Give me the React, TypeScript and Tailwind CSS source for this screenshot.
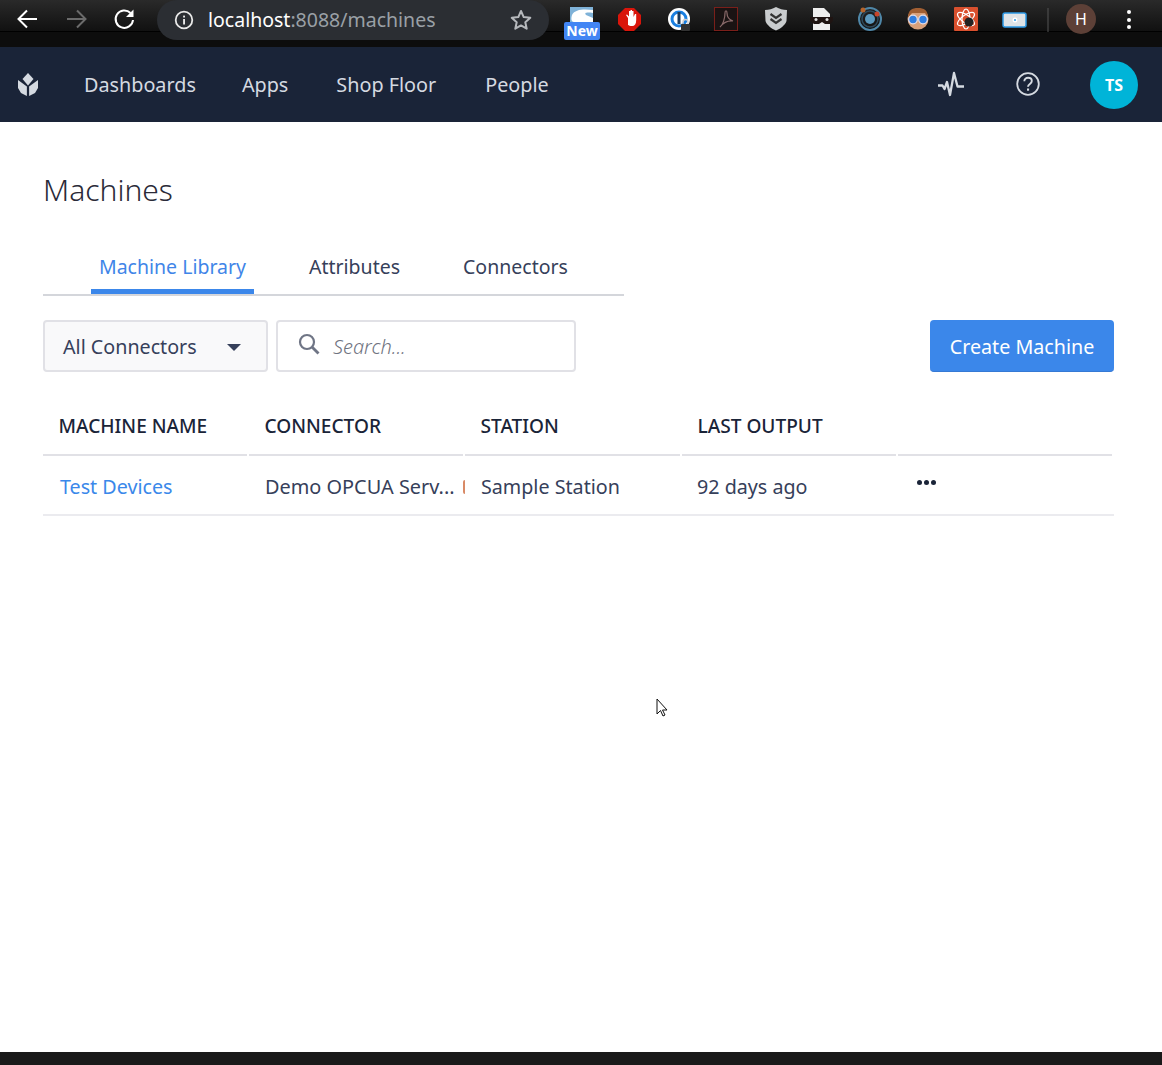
import React from "react";

const F = { fontFamily: '"Noto Sans", "Open Sans", sans-serif' };

function ChromeBar() {
  return (
    <div className="h-[47px] bg-[#0d0d0d] relative shrink-0 overflow-hidden">
      <div className="h-[32px] bg-gradient-to-b from-[#2a2a2a] to-[#111111] border-b border-black flex items-start">
        <svg width="157" height="32" viewBox="0 0 157 32" fill="none" className="shrink-0">
          <path d="M37 19H19M27 10.500 18.500 19l8.500 8.500" stroke="#fff" strokeWidth="2" />
          <path d="M67 19h18M77 10.500 85.500 19 77 27.500" stroke="#6b6b6b" strokeWidth="2" />
          <path d="M130.500 13a8.700 8.700 0 1 0 2.500 7" stroke="#fff" strokeWidth="2" />
          <path d="M133.500 9.500v7.500h-7.500z" fill="#fff" />
        </svg>
      </div>
      <div className="absolute left-[157px] top-0 w-[392px] h-[40px] rounded-[20px] bg-[#2b2e33] flex items-center pl-[17px] pr-[16px]">
        <svg width="20" height="20" viewBox="0 0 20 20" fill="none" className="shrink-0">
          <circle cx="10" cy="10" r="8.300" stroke="#e8e8e8" strokeWidth="1.800" />
          <rect x="9.100" y="9" width="1.900" height="5.500" fill="#e8e8e8" />
          <rect x="9.100" y="5.600" width="1.900" height="1.900" fill="#e8e8e8" />
        </svg>
        <div className="ml-[14px] text-[19.5px] leading-none text-white whitespace-nowrap" style={F}>
          localhost<span className="text-[#9aa0a6]">:8088/machines</span>
        </div>
        <svg width="24" height="24" viewBox="0 0 24 24" fill="none" className="ml-auto shrink-0">
          <path d="m12 3 2.700 6.100 6.600.7-5 4.400 1.400 6.500L12 17.400l-5.700 3.300 1.400-6.500-5-4.400 6.600-.7z" stroke="#b5b8bc" strokeWidth="2" strokeLinejoin="round" />
        </svg>
      </div>
      <div className="absolute left-[564px] top-[6px] w-[36px] h-[34px]">
        <svg width="36" height="18" viewBox="0 0 36 18" className="absolute left-0 top-0">
          <rect x="6" y="1" width="23" height="15" fill="#7fb2d8" />
          <path d="M8 9c3-6 12-6 21-5v3c-7-1-9 0-7 2l7 3v4H10c-3 0-3-4-2-7z" fill="#fff" />
        </svg>
        <div className="absolute left-0 top-[16px] w-[36px] h-[18px] bg-[#4285f4] rounded-[2px] text-white text-[14px] leading-[18px] font-bold text-center" style={F}>New</div>
      </div>
      <svg width="470" height="34" viewBox="0 0 470 34" fill="none" className="absolute left-[612px] top-0">
        <path d="M11 8h9l7 7v9l-7 7h-9l-7-7v-9z" transform="translate(2,0)" fill="#d9150b" />
        <path d="M12 22v-7l-2-3 1-.5 2 2V8h1.500v5V7h1.500v6V8h1.500v6l1.500-3h1.200v6c0 4-1.500 6-4 6s-3.200-.5-4.200-1z" transform="translate(4,3)" fill="#fff" />
        <circle cx="67" cy="19" r="11" fill="#fff" />
        <circle cx="67" cy="19" r="8.500" fill="#1a7fe0" />
        <circle cx="67" cy="19" r="5.500" fill="#fff" />
        <rect x="65.500" y="12" width="3" height="12" fill="#1c3a5a" />
        <rect x="69" y="24" width="9" height="7" rx="1" fill="#333" />
        <path d="M71 24v-2a2.500 2.500 0 0 1 5 0v2" stroke="#ccc" strokeWidth="1.300" />
        <rect x="102.500" y="7.500" width="23" height="23" fill="#1a1313" stroke="#7a1f1a" strokeWidth="1" />
        <path d="M108 27c3-2 5-9 5-14 0-3 2-3 2 0 0 4 3 7 6 8-4-.5-9 1-13 6z" stroke="#8a6a6a" strokeWidth="1.200" />
        <path d="M153 10c4 0 7.500-1 11-3 3.500 2 7 3 11 3l-.5 11c-1 4-6.500 8-10.500 9.500-4-1.500-9.500-5.500-10.500-9.500z" fill="#c9ccce" />
        <path d="m158.500 14 5.500 4 5.500-4M158.500 19l5.500 4 5.500-4" stroke="#333" strokeWidth="2.200" />
        <path d="M201 8h11l6 6v16h-17z" fill="#eee" />
        <path d="M198 17h23v4l-3 3h-5l-3-2-3 2h-5l-4-3z" fill="#1f1412" />
        <circle cx="204" cy="19.500" r="1.500" fill="#ddd" />
        <circle cx="215" cy="19.500" r="1.500" fill="#ddd" />
        <circle cx="258" cy="19" r="11" stroke="#4f87a8" strokeWidth="2" />
        <circle cx="258" cy="19" r="8" stroke="#2e4a5c" strokeWidth="1.500" />
        <circle cx="258" cy="19" r="5" fill="#5c99be" />
        <circle cx="251" cy="10" r="2.500" fill="#b4642c" />
        <circle cx="265" cy="14" r="2.500" fill="#c8452a" />
        <circle cx="306" cy="19" r="10.500" fill="#d8a07a" />
        <path d="M296 18c0-8 4-10 10-10s10 2 10 10l-3-5h-13z" fill="#a15f33" />
        <circle cx="301" cy="19.500" r="4.300" fill="#2f7de0" stroke="#dde" strokeWidth="1.200" />
        <circle cx="311" cy="19.500" r="4.300" fill="#2f7de0" stroke="#dde" strokeWidth="1.200" />
        <rect x="342" y="7" width="24" height="24" rx="1" fill="#d9502e" />
        <ellipse cx="354" cy="19" rx="10" ry="4" stroke="#fff" strokeWidth="1.200" transform="rotate(35 354 19)" />
        <ellipse cx="354" cy="19" rx="10" ry="4" stroke="#fff" strokeWidth="1.200" transform="rotate(-35 354 19)" />
        <ellipse cx="354" cy="19" rx="4" ry="10" stroke="#fff" strokeWidth="1.200" />
        <circle cx="357" cy="22" r="4.500" fill="#222" />
        <rect x="391" y="13" width="23" height="14" rx="2" fill="#dfe3e6" stroke="#2e9ae6" strokeWidth="1.500" />
        <circle cx="403" cy="20" r="2.500" fill="#fff" />
        <circle cx="403" cy="20" r="1" fill="#2e9ae6" />
        <rect x="435.500" y="8" width="1" height="24" fill="#555" />
      </svg>
      <div className="absolute left-[1066px] top-[4px] w-[30px] h-[30px] rounded-full bg-[#5d4037] text-white text-[16px] leading-[30px] text-center" style={F}>H</div>
      <div className="absolute left-[1127px] top-[10px] flex flex-col gap-[3.500px]">
        <div className="w-[4px] h-[4px] rounded-full bg-white" />
        <div className="w-[4px] h-[4px] rounded-full bg-white" />
        <div className="w-[4px] h-[4px] rounded-full bg-white" />
      </div>
    </div>
  );
}

function NavBar() {
  return (
    <nav className="h-[75px] bg-[#1a2438] flex items-center shrink-0 text-[#d5dae1] text-[19.8px]" style={F}>
      <svg width="22" height="24" viewBox="0 0 22 24" className="ml-[17px] shrink-0 -mt-[1px]" fill="#d5dae1">
        <path d="M11 1 16.500 7 11 13.500 5.500 7z" />
        <path d="M1 8 9.900 14.500V24L4 21 1 16z" />
        <path d="M21 8 12.100 14.500V24L18 21 21 16z" />
      </svg>
      <div className="ml-[45px] flex whitespace-nowrap">
        <span>Dashboards</span>
        <span className="ml-[46px]">Apps</span>
        <span className="ml-[48px]">Shop Floor</span>
        <span className="ml-[49px]">People</span>
      </div>
      <svg width="28" height="28" viewBox="0 0 28 28" fill="none" className="ml-auto shrink-0 -mt-[1px]">
        <path d="M1 15.500h4.500l2 3.500 2.500-7 3 13L17 3l3.500 13.500h6.500" stroke="#d5dae1" strokeWidth="2.300" strokeLinejoin="round" />
      </svg>
      <svg width="24" height="24" viewBox="0 0 24 24" fill="none" className="ml-[51px] shrink-0 -mt-[1px]">
        <circle cx="12" cy="12" r="10.800" stroke="#d5dae1" strokeWidth="1.800" />
        <path d="M8.300 9.300c0-2.200 1.700-3.500 3.800-3.500s3.700 1.300 3.700 3.200c0 2.900-3.800 2.900-3.800 5.700" stroke="#d5dae1" strokeWidth="1.900" />
        <rect x="11" y="16.500" width="2.100" height="2.200" fill="#d5dae1" />
      </svg>
      <div className="ml-[50px] mr-[24px] w-[48px] h-[48px] rounded-full bg-[#00b4d8] text-white text-[16px] font-bold flex items-center justify-center shrink-0">TS</div>
    </nav>
  );
}

const cols = [
  { label: "MACHINE NAME", width: "w-[204px]" },
  { label: "CONNECTOR", width: "w-[214px]" },
  { label: "STATION", width: "w-[215px]" },
  { label: "LAST OUTPUT", width: "w-[214px]" },
  { label: "", width: "w-[214px]" },
];

function MachinesTable() {
  return (
    <div className="mt-[29px] ml-[43px] w-[1071px]">
      <div className="flex gap-[2px] w-[1069px]">
        {cols.map((c) => (
          <div key={c.width + c.label} className={`h-[55px] border-b-2 border-[#e1e1e6] pl-[15.500px] pt-[12px] text-[19.100px] leading-[27px] font-medium text-[#1a2438] whitespace-nowrap ${c.width}`}>
            {c.label}
          </div>
        ))}
      </div>
      <div className="flex h-[60px] border-b-2 border-[#ebebef] text-[19.700px] leading-[27px] text-[#36405a]">
        <div className="w-[206px] pl-[17px] pt-[17px] text-[#3a88ea] whitespace-nowrap">Test Devices</div>
        <div className="w-[216px] pl-[16px] pt-[17px] whitespace-nowrap flex">
          <span className="text-[19.900px]">Demo OPCUA Serv...</span>
          <span className="ml-[8px] mt-[7px] w-[2px] h-[14px] border-l-2 border-[#d98a66] rounded-l-[2px]" />
        </div>
        <div className="w-[216px] pl-[16px] pt-[17px] whitespace-nowrap">Sample Station</div>
        <div className="w-[216px] pl-[16px] pt-[17px] whitespace-nowrap">92 days ago</div>
        <div className="pl-[20px] pt-[24px] flex gap-[2px] h-fit">
          <i className="block w-[5px] h-[5px] rounded-full bg-[#1a2438]" />
          <i className="block w-[5px] h-[5px] rounded-full bg-[#1a2438]" />
          <i className="block w-[5px] h-[5px] rounded-full bg-[#1a2438]" />
        </div>
      </div>
    </div>
  );
}

export default function App() {
  return (
    <div className="w-[1162px] h-[1065px] bg-white flex flex-col overflow-hidden relative" style={F}>
      <ChromeBar />
      <NavBar />
      <main className="flex-1 min-h-0 bg-white">
        <h1 className="ml-[43px] mt-[46px] text-[30px] leading-[44px] font-light text-[#2a2a38] h-[44px]">Machines</h1>
        <div className="ml-[43px] mt-[41px] w-[581px] h-[43px] border-b-2 border-[#d4d6db] flex text-[19.500px] leading-[27px] pl-[48px] text-[#36405a]">
          <div className="h-[41px] w-[163px] text-center text-[#3f85e8] border-b-[5px] border-[#3b87ea]">Machine Library</div>
          <div className="ml-[55px]">Attributes</div>
          <div className="ml-[63px]">Connectors</div>
        </div>
        <div className="ml-[43px] mt-[24px] w-[1071px] flex h-[52px]">
          <div className="w-[225px] h-[52px] rounded-[4px] border-2 border-[#e1e1e6] bg-[#f9f9fa] flex items-center pl-[18px] pt-[2px] text-[19.700px] text-[#36405a]">
            All Connectors
            <span className="ml-[30px] w-0 h-0 border-x-[7px] border-x-transparent border-t-[7px] border-t-[#36405a]" />
          </div>
          <div className="ml-[8px] w-[300px] h-[52px] rounded-[4px] border-2 border-[#e1e1e6] bg-white flex items-center pl-[19px] pt-[2px] text-[20px] italic font-light text-[#6f7380]">
            <svg width="24" height="24" viewBox="0 0 24 24" fill="none" className="shrink-0 -mt-[6px]">
              <circle cx="10" cy="10" r="7" stroke="#6f7585" strokeWidth="2.200" />
              <path d="m15 15 6.500 6.500" stroke="#6f7585" strokeWidth="2.800" />
            </svg>
            <span className="ml-[12px]">Search...</span>
          </div>
          <div className="ml-auto w-[184px] h-[52px] rounded-[4px] bg-[#3b87ea] border-b border-[#3679d4] pt-[2px] text-white text-[19.700px] flex items-center justify-center">Create Machine</div>
        </div>
        <MachinesTable />
      </main>
      <svg width="14" height="22" viewBox="0 0 14 22" className="absolute left-[656px] top-[698px]">
        <path d="M1 1v15l3.500-3.500L7 18l2-1-2.500-5H11z" fill="#fff" stroke="#111" strokeWidth="1" />
      </svg>
      <div className="h-[13px] bg-[#1a1a1a] shrink-0" />
    </div>
  );
}
